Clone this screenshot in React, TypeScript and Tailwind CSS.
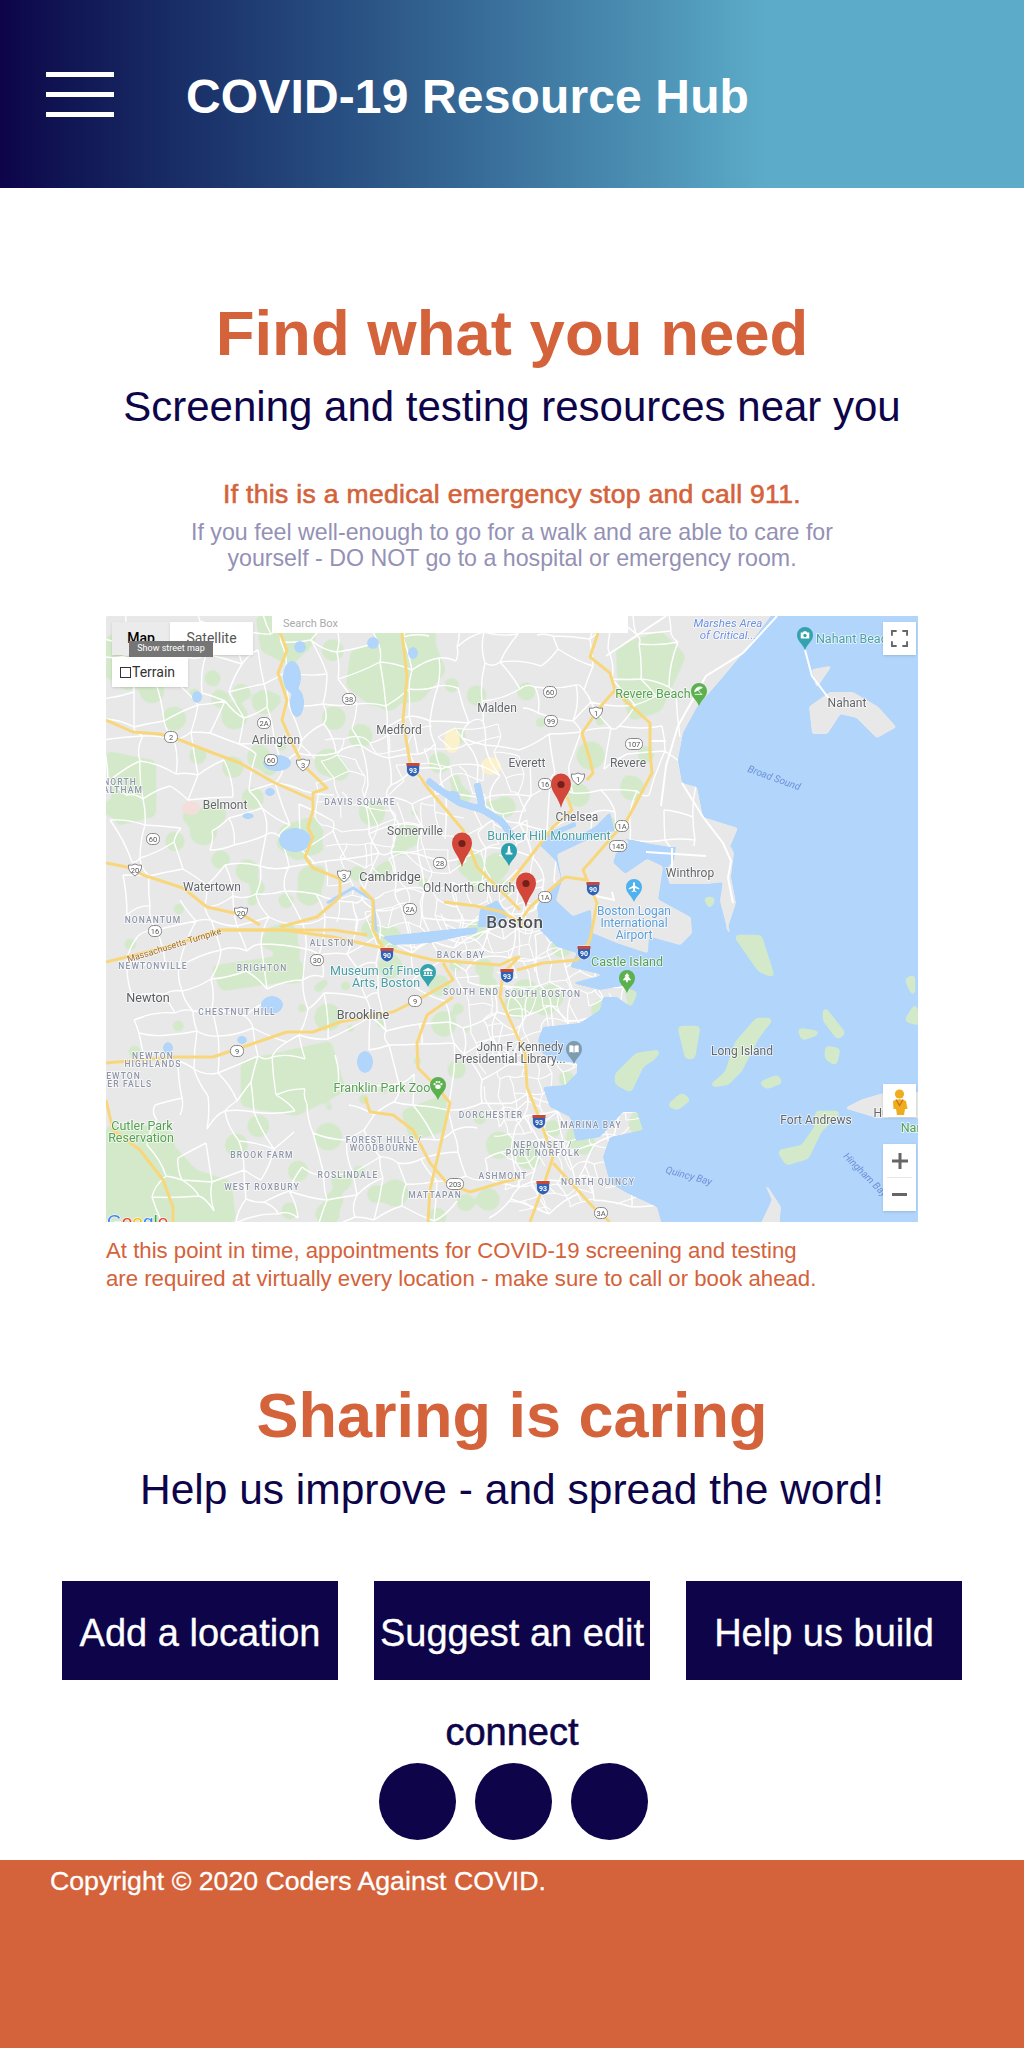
const LAND = "#e8e8e8";
const WATER = "#b1d5fb";
const GREEN = "#d3e9ca";
const ROAD = "#f8d77c";

function seeded(seed: number) {
  let s = seed;
  return () => {
    s = (s * 16807) % 2147483647;
    return s / 2147483647;
  };
}

// seeded street mesh so the map looks the same every run
function streetMesh(x0: number, y0: number, x1: number, y1: number, step: number, seed: number, drop: number) {
  const rnd = seeded(seed);
  const pts: [number, number][][] = [];
  for (let r = 0; y0 + r * step <= y1; r++) {
    const row: [number, number][] = [];
    for (let c = 0; x0 + c * step <= x1; c++) {
      row.push([x0 + c * step + (rnd() - 0.5) * step * 0.8 + r * 3, y0 + r * step + (rnd() - 0.5) * step * 0.8 - c * 2]);
    }
    pts.push(row);
  }
  let d = "";
  pts.forEach((row, r) =>
    row.forEach((p, c) => {
      const right = row[c + 1];
      const down = pts[r + 1]?.[c];
      if (right && rnd() > drop) {
        const mx = (p[0] + right[0]) / 2;
        const my = (p[1] + right[1]) / 2 + (rnd() - 0.5) * step * 0.4;
        d += `M${p[0].toFixed(0)},${p[1].toFixed(0)}Q${mx.toFixed(0)},${my.toFixed(0)} ${right[0].toFixed(0)},${right[1].toFixed(0)}`;
      }
      if (down && rnd() > drop) {
        const mx = (p[0] + down[0]) / 2 + (rnd() - 0.5) * step * 0.4;
        const my = (p[1] + down[1]) / 2;
        d += `M${p[0].toFixed(0)},${p[1].toFixed(0)}Q${mx.toFixed(0)},${my.toFixed(0)} ${down[0].toFixed(0)},${down[1].toFixed(0)}`;
      }
    }),
  );
  return d;
}

const STREETS = streetMesh(-10, -5, 560, 620, 27, 4711, 0.24);
const INNER = streetMesh(200, 130, 420, 340, 17, 2207, 0.38);
const DOWNTOWN = streetMesh(340, 300, 500, 600, 13, 991, 0.35);

const rndBlob = seeded(1234);
const SMALL_PARKS: [number, number, number][] = Array.from({ length: 150 }, () => [
  rndBlob() * 540,
  rndBlob() * 606,
  4 + rndBlob() * 10,
]);

const WATER_MAIN =
  "M680,-20 L830,-20 L830,626 L561,626 L551,591 L521,577 L504,567 L497,541 L504,521 L537,514 L531,496 L517,496 L494,521 L470,525 L464,501 L444,491 L437,471 L459,469 L471,457 L471,447 L447,444 L436,437 L432,424 L437,411 L474,407 L494,394 L497,381 L511,381 L522,389 L527,377 L521,369 L494,374 L466,367 L497,359 L464,351 L471,337 L451,331 L434,314 L431,290 L440,277 L455,262 L450,245 L440,235 L432,228 L445,222 L470,222 L490,210 L504,196 L510,222 L527,224 L545,228 L564,231 L624,231 L632,212 L597,201 L591,171 L576,167 L572,144 L577,117 L591,91 L617,61 L637,37 Z";

const GREY_LAND = [
  "571,231 624,231 627,237 624,261 629,287 621,311 623,316 615,285 618,265 601,267 564,267 561,254 569,244",
  "452,239 477,227 507,216 522,226 509,237 506,247 519,259 541,244 556,251 551,284 584,302 585,317 574,328 542,319 541,336 511,326 487,316 486,292 467,299 451,284 457,264",
  "704,91 724,77 747,77 771,91 789,111 771,121 751,101 734,97 721,117 707,117",
  "707,54 724,51 711,70",
  "741,492 757,484 781,477 830,477 830,501 771,501",
  "661,571 674,591 671,626 647,626 667,584",
];

const GREEN_ISLANDS = [
  "607,469 621,457 631,427 651,404 664,404 651,421 634,454 621,467",
  "574,412 592,412 587,441 581,441",
  "511,459 531,439 552,436 547,442 536,449 524,474 511,467",
  "564,489 576,479 582,484 571,492",
  "631,321 654,321 666,359 654,354",
  "694,414 711,417 697,422",
  "719,394 737,417 732,421 719,404",
  "721,432 732,434 729,447 721,442",
  "656,467 671,461 674,466 661,471",
  "674,536 697,531 711,511 711,497 732,497 714,514 701,541 681,547",
  "801,364 807,361 807,377",
  "801,404 809,391 812,407",
  "521,375 529,377 524,389",
  "600,283 607,283 604,290",
];

// parks and woods, drawn under the streets
const PARKS = [
  "0,20 35,15 60,35 50,65 20,75 0,60",
  "150,0 205,0 210,25 185,50 155,35",
  "245,35 320,5 340,55 315,85 265,90 240,70",
  "510,30 555,15 580,40 555,95 525,105 512,70",
  "0,135 50,145 50,200 10,210",
  "175,210 210,200 218,235 190,245 170,230",
  "105,350 175,340 185,365 115,375",
  "135,445 225,425 240,475 190,500 135,490",
  "0,510 50,510 100,565 110,606 0,606",
  "60,545 125,565 130,606 70,606",
  "295,495 340,478 340,515 305,525",
];

const YELLOW = [
  "M0,104 27,116 54,118 74,124 107,137 134,147 167,166 207,184",
  "M174,0 174,17 181,34 172,57 181,84 176,104 186,127 197,149 221,172 207,177 207,194 202,212 207,221 199,241 207,252 237,264",
  "M296,0 296,17 301,61 297,104 304,147 321,171 357,214 371,251 414,294",
  "M414,340 397,357 394,381 404,404 419,437 421,471 434,504 447,541 437,571 424,606",
  "M447,547 487,591 504,606",
  "M0,346 61,331 114,314 177,314 227,321 277,332 327,344 394,349 411,341",
  "M111,314 161,314 227,314 261,319",
  "M0,247 21,251 37,259 77,272 101,291 137,299 154,309",
  "M234,261 234,281 211,301 174,311",
  "M254,271 267,284 267,314 277,332",
  "M0,447 67,441 107,441 137,431 181,416 207,416 234,406 287,396 317,381 347,364 337,347",
  "M347,381 321,399 311,427 312,452 331,471 344,487 334,531 324,574 322,606",
  "M259,481 264,496 287,499 307,514 324,547 341,567 364,576 394,567 414,562",
  "M0,484 7,514 34,534 57,564 67,591 67,606",
  "M492,17 484,41 504,57 509,74 494,91 476,117 484,144 487,157 481,164",
  "M461,181 466,194 447,211 424,241 404,267",
  "M511,77 544,107 544,137 546,157 521,204 477,254 481,264 459,261 424,291 417,301",
  "M481,264 491,287 484,324 471,344 437,347 411,354",
  "M338,286 370,290 396,296 420,310",
];

const WHITE_ROADS = [
  "M671,0 637,37 600,60 572,110 560,150 555,190",
  "M576,167 597,201 617,227 625,245 622,262 627,287",
  "M540,236 600,240",
  "M566,232 566,262",
  "M699,34 706,60 724,84",
  "M545,125 560,125",
  "M500,40 560,0",
  "M490,280 508,284 506,276",
];

const LAKES: [number, number, number, number][] = [
  [186, 61, 9, 16], [191, 87, 7, 14], [194, 31, 6, 6], [171, 147, 14, 8], [189, 224, 16, 12], [164, 176, 5, 4],
  [259, 446, 8, 11], [166, 389, 11, 9], [136, 424, 5, 4], [91, 81, 5, 6], [267, 27, 6, 6], [307, 37, 5, 6],
  [62, 432, 5, 6], [142, 200, 6, 3], [347, 180, 7, 5],
];

type Kind = "place" | "big" | "boston" | "caps" | "teal" | "green" | "blue" | "logan";

const LABELS: [number, number, string, Kind][] = [
  [391, 96, "Malden", "place"], [293, 118, "Medford", "place"], [170, 128, "Arlington", "place"],
  [119, 193, "Belmont", "place"], [309, 219, "Somerville", "place"], [106, 275, "Watertown", "place"],
  [284, 265, "Cambridge", "big"], [363, 276, "Old North Church", "place"], [409, 312, "Boston", "boston"],
  [421, 151, "Everett", "place"], [522, 151, "Revere", "place"], [471, 205, "Chelsea", "place"],
  [741, 91, "Nahant", "place"], [584, 261, "Winthrop", "place"], [42, 386, "Newton", "big"],
  [257, 403, "Brookline", "big"], [636, 439, "Long Island", "place"], [710, 508, "Fort Andrews", "place"],
  [775, 501, "Hu", "place"], [414, 435, "John F. Kennedy", "place"], [404, 447, "Presidential Library...", "place"],
  [14, 169, "NORTH", "caps"], [17, 177, "ALTHAM", "caps"], [254, 189, "DAVIS SQUARE", "caps"], [47, 307, "NONANTUM", "caps"],
  [226, 330, "ALLSTON", "caps"], [355, 342, "BACK BAY", "caps"], [47, 353, "NEWTONVILLE", "caps"], [156, 355, "BRIGHTON", "caps"],
  [365, 379, "SOUTH END", "caps"], [437, 381, "SOUTH BOSTON", "caps"], [131, 399, "CHESTNUT HILL", "caps"],
  [47, 443, "NEWTON", "caps"], [47, 451, "HIGHLANDS", "caps"], [14, 463, "NEWTON", "caps"], [14, 471, "UPPER FALLS", "caps"],
  [385, 502, "DORCHESTER", "caps"], [278, 527, "FOREST HILLS /", "caps"], [278, 535, "WOODBOURNE", "caps"],
  [156, 542, "BROOK FARM", "caps"], [242, 562, "ROSLINDALE", "caps"], [397, 563, "ASHMONT", "caps"],
  [156, 574, "WEST ROXBURY", "caps"], [329, 582, "MATTAPAN", "caps"], [485, 512, "MARINA BAY", "caps"],
  [437, 532, "NEPONSET /", "caps"], [437, 540, "PORT NORFOLK", "caps"], [492, 569, "NORTH QUINCY", "caps"],
  [443, 224, "Bunker Hill Monument", "teal"], [749, 27, "Nahant Beach", "teal"], [269, 359, "Museum of Fine", "teal"],
  [280, 371, "Arts, Boston", "teal"], [547, 82, "Revere Beach", "green"], [276, 476, "Franklin Park Zoo", "green"],
  [36, 514, "Cutler Park", "green"], [35, 526, "Reservation", "green"], [521, 350, "Castle Island", "green"],
  [806, 516, "Nan", "green"], [622, 11, "Marshes Area", "blue"], [622, 23, "of Critical...", "blue"],
  [528, 299, "Boston Logan", "logan"], [528, 311, "International", "logan"], [528, 323, "Airport", "logan"],
];

const SEA_LABELS: [number, number, number, string][] = [
  [667, 165, 20, "Broad Sound"],
  [582, 563, 15, "Quincy Bay"],
  [757, 561, 45, "Hingham Bay"],
];

const SHIELDS: [number, number, string][] = [
  [243, 83, "38"], [158, 107, "2A"], [65, 121, "2"], [165, 144, "60"], [197, 149, "3"], [47, 223, "60"], [29, 254, "20"],
  [334, 247, "28"], [238, 260, "3"], [304, 293, "2A"], [135, 297, "20"], [49, 315, "16"], [444, 76, "60"], [490, 97, "1"],
  [445, 105, "99"], [528, 128, "107"], [472, 163, "1"], [439, 168, "16"], [516, 210, "1A"], [512, 230, "145"], [439, 281, "1A"],
  [211, 344, "30"], [309, 385, "9"], [131, 435, "9"], [349, 568, "203"], [495, 597, "3A"],
];

const US_ROUTES = ["1", "3", "20"];

const INTERSTATES: [number, number, string][] = [
  [307, 153, "93"], [487, 272, "90"], [281, 338, "90"], [401, 359, "93"], [478, 336, "90"], [433, 505, "93"], [437, 571, "93"],
];

// little white glyphs, drawn around the head of the marker
const POI_GLYPHS: Record<string, React.ReactNode> = {
  monument: <path d="M-1,-6 h2 l1,8 h2 v2 h-8 v-2 h2 z" fill="#fff" />,
  camera: (
    <>
      <path d="M-5,-3 h2.5 l1,-1.5 h3 l1,1.5 h2.5 v7 h-10 z" fill="#fff" />
      <circle r="2" cy="0.5" fill="#35a3ad" />
    </>
  ),
  umbrella: <path d="M-5,1 a6,6 0 0 1 9,-5 z M-1,-1 l4,5 M-5,4 h9" fill="#fff" stroke="#fff" strokeWidth="1" />,
  plane: <path d="M0,-6 q1.2,0 1.2,2 v2.4 l5,3 v1.4 l-5,-1.6 v2.8 l1.6,1.2 v1 l-2.8,-.8 -2.8,.8 v-1 l1.6,-1.2 v-2.8 l-5,1.6 v-1.4 l5,-3 v-2.4 q0,-2 1.2,-2 z" fill="#fff" />,
  museum: <path d="M0,-5 l5.5,3 v1 h-11 v-1 z M-4.5,0 h2 v3 h-2 z M-1,0 h2 v3 h-2 z M2.5,0 h2 v3 h-2 z M-5.5,3.5 h11 v1.2 h-11 z" fill="#fff" />,
  paw: (
    <g fill="#fff">
      <ellipse cy="2" rx="3.2" ry="2.6" />
      <circle cx="-4" cy="-1" r="1.3" />
      <circle cx="-1.5" cy="-3.4" r="1.3" />
      <circle cx="1.5" cy="-3.4" r="1.3" />
      <circle cx="4" cy="-1" r="1.3" />
    </g>
  ),
  tree: <path d="M0,-6 l3,4 h-1.5 l3.5,4.5 h-4 v2.5 h-2 v-2.5 h-4 l3.5,-4.5 h-1.5 z" fill="#fff" />,
  book: <path d="M-5.5,-4 q3,-1 5,.5 v8 q-2,-1.5 -5,-.5 z M5.5,-4 q-3,-1 -5,.5 v8 q2,-1.5 5,-.5 z" fill="#fff" />,
};

const POIS: [number, number, string, string][] = [
  [403, 250, "#2a9fb0", "monument"], [699, 34, "#35a3ad", "camera"], [593, 90, "#5cb14f", "umbrella"], [528, 286, "#4db2ee", "plane"],
  [322, 371, "#35a3ad", "museum"], [332, 484, "#5cb14f", "paw"], [521, 377, "#5cb14f", "tree"], [468, 448, "#7f9cae", "book"],
];

const PINS: [number, number][] = [
  [356, 251],
  [455, 192],
  [420, 291],
];

const LABEL_STYLE: Record<Kind, { fill: string; size: number; spacing?: number; weight?: number; italic?: boolean }> = {
  place: { fill: "#63666a", size: 12 },
  big: { fill: "#5a5d61", size: 12.6 },
  boston: { fill: "#4e5155", size: 17, spacing: 0.6, weight: 500 },
  caps: { fill: "#8d95a8", size: 8.5, spacing: 1.1, weight: 500 },
  teal: { fill: "#4a9fa6", size: 12.5 },
  green: { fill: "#55a052", size: 12.5 },
  blue: { fill: "#6d92e2", size: 11.5, italic: true },
  logan: { fill: "#5a9edc", size: 12 },
};

function MapDrawing() {
  return (
    <svg viewBox="0 0 812 606" className="block h-full w-full blur-[0.35px]" fontFamily="Roboto, sans-serif">
      <defs>
        <filter id="goo" filterUnits="userSpaceOnUse" x="-30" y="-30" width="880" height="670">
          <feGaussianBlur stdDeviation="3" />
          <feComponentTransfer>
            <feFuncA type="linear" slope="5" intercept="-1.8" />
          </feComponentTransfer>
        </filter>
        <filter id="soft" filterUnits="userSpaceOnUse" x="-30" y="-30" width="880" height="670">
          <feGaussianBlur stdDeviation="1" />
          <feComponentTransfer>
            <feFuncA type="linear" slope="4" intercept="-1.5" />
          </feComponentTransfer>
        </filter>
        <filter id="islands" filterUnits="userSpaceOnUse" x="-30" y="-30" width="880" height="670">
          <feGaussianBlur stdDeviation="2.2" />
          <feComponentTransfer>
            <feFuncA type="linear" slope="6" intercept="-2.2" />
          </feComponentTransfer>
        </filter>
      </defs>
      <rect width="812" height="606" fill={LAND} />
      <g filter="url(#goo)" fill={GREEN}>
        {PARKS.map((p) => (
          <polygon key={p} points={p} />
        ))}
        {SMALL_PARKS.map(([cx, cy, r]) => (
          <circle key={`${cx}-${cy}`} cx={cx} cy={cy} r={r} />
        ))}
      </g>
      <ellipse cx="85" cy="192" rx="9" ry="7" fill="#f4dedb" />
      <ellipse cx="346" cy="125" rx="8" ry="12" fill="#fbf1cb" />
      <ellipse cx="385" cy="150" rx="10" ry="9" fill="#fbf1cb" />
      <path d={STREETS} fill="none" stroke="#fff" strokeWidth="1.4" />
      <path d={INNER} fill="none" stroke="#fff" strokeWidth="1.1" />
      <path d={DOWNTOWN} fill="none" stroke="#fff" strokeWidth="1.1" />
      <g filter="url(#soft)" fill={WATER}>
        <path d={WATER_MAIN} />
        <polygon points="266,314 287,329 324,327 371,317 374,293 391,284 402,300 392,310 347,313 271,321" />
        {LAKES.map(([cx, cy, rx, ry]) => (
          <ellipse key={`${cx}-${cy}`} cx={cx} cy={cy} rx={rx} ry={ry} />
        ))}
        <path d="M321,164 334,174 354,187 377,194 395,205 408,222" fill="none" stroke={WATER} strokeWidth="7" />
        <path d="M371,167 376,190" fill="none" stroke={WATER} strokeWidth="7" />
        <path d="M440,220 470,208" fill="none" stroke={WATER} strokeWidth="5" />
      </g>
      <path d="M221,287 247,272 267,284 270,316" fill="none" stroke={WATER} strokeWidth="3" />
      <g filter="url(#soft)">
        {GREY_LAND.map((p) => (
          <polygon key={p} points={p} fill={LAND} stroke={LAND} strokeWidth="2" strokeLinejoin="round" />
        ))}
      </g>
      <g filter="url(#islands)">
        {GREEN_ISLANDS.map((p) => (
          <polygon key={p} points={p} fill={GREEN} stroke={GREEN} strokeWidth="4" strokeLinejoin="round" />
        ))}
      </g>
      {WHITE_ROADS.map((d) => (
        <path key={d} d={d} fill="none" stroke="#fff" strokeWidth="2" />
      ))}
      {YELLOW.map((d) => (
        <path key={d} d={d} fill="none" stroke={ROAD} strokeWidth="3" strokeLinejoin="round" />
      ))}
      {LABELS.map(([x, y, text, kind]) => {
        const st = LABEL_STYLE[kind];
        return (
          <text
            key={`${text}-${x}`}
            x={x}
            y={y}
            textAnchor="middle"
            fill={st.fill}
            fontSize={st.size}
            letterSpacing={st.spacing}
            fontWeight={st.weight}
            fontStyle={st.italic ? "italic" : undefined}
            stroke="#fff"
            strokeOpacity="0.75"
            strokeWidth="1.6"
            paintOrder="stroke"
          >
            {text}
          </text>
        );
      })}
      {SEA_LABELS.map(([x, y, rot, text]) => (
        <text key={text} x={x} y={y} transform={`rotate(${rot} ${x} ${y})`} textAnchor="middle" fill="#6d92d8" fontSize="10" fontStyle="italic">
          {text}
        </text>
      ))}
      <text x="69" y="332" transform="rotate(-17 69 332)" textAnchor="middle" fill="#9a6a30" fontSize="9" stroke="#fff" strokeOpacity="0.6" strokeWidth="1.2" paintOrder="stroke">
        Massachusetts Turnpike
      </text>
      {SHIELDS.map(([x, y, n]) => (
        <g key={`${x}-${y}`}>
          {US_ROUTES.includes(n) ? (
            <path d={`M${x - 6.5},${y - 5} q3,1 6.5,-1 q3.5,2 6.5,1 q1,6 -6.5,11 q-7.5,-5 -6.5,-11 z`} fill="#fff" stroke="#7a7a7a" strokeWidth="0.9" />
          ) : (
            <rect x={x - (n.length > 2 ? 8.5 : 6.5)} y={y - 5.5} width={n.length > 2 ? 17 : 13} height="11" rx="5" fill="#fff" stroke="#7a7a7a" strokeWidth="0.9" />
          )}
          <text x={x} y={y + 2.7} textAnchor="middle" fontSize="7.5" fill="#555">
            {n}
          </text>
        </g>
      ))}
      {INTERSTATES.map(([x, y, n]) => (
        <g key={`${x}-${y}`}>
          <path d={`M${x - 6.5},${y - 6} h13 v7 q0,5 -6.5,7 q-6.5,-2 -6.5,-7 z`} fill="#2f62b5" stroke="#fff" strokeWidth="0.6" />
          <rect x={x - 6.5} y={y - 6} width="13" height="3" fill="#c8473c" />
          <text x={x} y={y + 4} textAnchor="middle" fontSize="7" fontWeight="700" fill="#fff">
            {n}
          </text>
        </g>
      ))}
      {POIS.map(([x, y, c, glyph]) => (
        <g key={`${x}-${y}`}>
          <path d={`M${x},${y} C${x - 3},${y - 7} ${x - 8},${y - 9} ${x - 8},${y - 15} a8,8 0 1 1 16,0 C${x + 8},${y - 9} ${x + 3},${y - 7} ${x},${y} z`} fill={c} />
          <g transform={`translate(${x} ${y - 15}) scale(0.85)`}>{POI_GLYPHS[glyph]}</g>
        </g>
      ))}
      {PINS.map(([x, y]) => (
        <g key={`${x}-${y}`}>
          <path d={`M${x},${y} C${x - 2},${y - 10} ${x - 10},${y - 16} ${x - 10},${y - 24} a10,10.5 0 1 1 20,0 C${x + 10},${y - 16} ${x + 2},${y - 10} ${x},${y} z`} fill="#d2473a" />
          <circle cx={x} cy={y - 23.5} r="3.6" fill="#74201a" />
        </g>
      ))}
      <text x="1" y="612" fontSize="19" fontFamily="'Liberation Sans', sans-serif" stroke="#fff" strokeWidth="1" paintOrder="stroke">
        <tspan fill="#4285f4">G</tspan>
        <tspan fill="#ea4335">o</tspan>
        <tspan fill="#fbbc05">o</tspan>
        <tspan fill="#4285f4">g</tspan>
        <tspan fill="#34a853">l</tspan>
        <tspan fill="#ea4335">e</tspan>
      </text>
    </svg>
  );
}

function Pegman() {
  return (
    <svg viewBox="0 0 33 33" className="h-full w-full">
      <circle cx="16.5" cy="10" r="4.6" fill="#f0ac1f" />
      <path d="M10,17 q6.5,-3.5 13,0 l1.5,8 h-2.5 l-1,6 h-7 l-1,-6 h-2.5 z" fill="#f0ac1f" />
      <path d="M13,15.5 l3.5,6 3.5,-6" fill="none" stroke="#c9701a" strokeWidth="1.2" />
    </svg>
  );
}

function MapControls() {
  return (
    <>
      <div className="absolute left-[166px] top-0 flex h-[17px] w-[356px] items-center bg-white pl-[11px] font-['Roboto',sans-serif] text-[11px] text-[#aaaaaa]">
        Search Box
      </div>
      <div className="absolute left-[6px] top-[6px] flex font-['Roboto',sans-serif] text-[14px]">
        <div className="flex h-[33px] w-[58px] items-center justify-center bg-[#ebebeb] font-medium text-black shadow-sm">Map</div>
        <div className="flex h-[33px] w-[83px] items-center justify-center bg-white text-[#565656] shadow-sm">Satellite</div>
      </div>
      <div className="absolute left-[6px] top-[41px] flex h-[30px] w-[76px] items-center gap-[1px] bg-white pl-[8px] font-['Roboto',sans-serif] text-[14px] text-[#333] shadow-sm">
        <span className="h-[11px] w-[11px] border border-[#333]" />
        Terrain
      </div>
      <div className="absolute left-[23px] top-[25px] flex h-[16px] w-[84px] items-center justify-center bg-[#757575] font-['Roboto',sans-serif] text-[9px] text-white">
        Show street map
      </div>
      <div className="absolute right-[2px] top-[6px] flex h-[33px] w-[33px] items-center justify-center bg-white shadow-sm">
        <svg viewBox="0 0 18 18" className="h-[17px] w-[17px]" fill="none" stroke="#666" strokeWidth="2">
          <path d="M1,6 V1 H6 M12,1 H17 V6 M17,12 V17 H12 M6,17 H1 V12" />
        </svg>
      </div>
      <div className="absolute right-[2px] top-[468px] h-[33px] w-[33px] bg-white shadow-sm">
        <Pegman />
      </div>
      <div className="absolute right-[2px] top-[528px] flex h-[67px] w-[33px] flex-col bg-white shadow-sm">
        <div className="flex flex-1 items-center justify-center">
          <svg viewBox="0 0 16 16" className="h-[16px] w-[16px]" fill="#666">
            <path d="M6.5,0 h3 v6.5 h6.5 v3 h-6.5 v6.5 h-3 v-6.5 h-6.5 v-3 h6.5 z" />
          </svg>
        </div>
        <div className="mx-[4px] h-px bg-[#e6e6e6]" />
        <div className="flex flex-1 items-center justify-center">
          <div className="h-[3px] w-[15px] bg-[#666]" />
        </div>
      </div>
    </>
  );
}

export default function App() {
  return (
    <div className="flex min-h-[2048px] w-full flex-col bg-white font-['Liberation_Sans',Arial,sans-serif]">
      <header className="flex h-[188px] items-center bg-gradient-to-r from-[#0d0449] to-[#5cacc9] to-75% pl-[46px]">
        <div className="flex w-[68px] flex-col gap-[15px]">
          <div className="h-[5px] bg-white" />
          <div className="h-[5px] bg-white" />
          <div className="h-[5px] bg-white" />
        </div>
        <h1 className="ml-[72px] pt-[5px] text-[48px] font-bold leading-none tracking-[0.14px] text-white">COVID-19 Resource Hub</h1>
      </header>

      <section className="flex flex-col items-center text-center">
        <h2 className="mt-[114px] text-[63.5px] font-bold leading-none text-[#d4623a]">Find what you need</h2>
        <p className="mt-[20px] text-[42px] leading-none text-[#0d0449]">Screening and testing resources near you</p>
        <p className="mt-[53px] text-[26.5px] leading-none tracking-[0.32px] text-[#d4623a] [-webkit-text-stroke:0.6px_#d4623a]">
          If this is a medical emergency stop and call 911.
        </p>
        <p className="mt-[12px] text-[23.2px] leading-[26px] text-[#9491b5]">
          If you feel well-enough to go for a walk and are able to care for
          <br />
          yourself - DO NOT go to a hospital or emergency room.
        </p>
      </section>

      <div className="relative ml-[106px] mt-[45px] h-[606px] w-[812px] overflow-hidden">
        <MapDrawing />
        <MapControls />
      </div>

      <p className="ml-[106px] mt-[15px] text-[22.2px] leading-[28px] text-[#d4623a]">
        At this point in time, appointments for COVID-19 screening and testing
        <br />
        are required at virtually every location - make sure to call or book ahead.
      </p>

      <section className="flex flex-col items-center text-center">
        <h2 className="mt-[91px] text-[63px] font-bold leading-none text-[#d4623a]">Sharing is caring</h2>
        <p className="mt-[22px] text-[42.5px] leading-none text-[#0d0449]">Help us improve - and spread the word!</p>
      </section>

      <div className="mt-[69px] grid grid-cols-3 gap-[36px] px-[62px]">
        {["Add a location", "Suggest an edit", "Help us build"].map((label) => (
          <a key={label} className="flex h-[99px] items-center justify-center bg-[#0d0449] pt-[6px] text-[38px] text-white [-webkit-text-stroke:0.3px_#fff]">
            {label}
          </a>
        ))}
      </div>

      <div className="flex flex-col items-center">
        <p className="mt-[33px] text-[38px] leading-none text-[#0d0449] [-webkit-text-stroke:0.6px_#0d0449]">connect</p>
        <div className="ml-[3px] mt-[12px] flex gap-[19px]">
          <span className="h-[77px] w-[77px] rounded-full bg-[#0d0449]" />
          <span className="h-[77px] w-[77px] rounded-full bg-[#0d0449]" />
          <span className="h-[77px] w-[77px] rounded-full bg-[#0d0449]" />
        </div>
      </div>

      <footer className="mt-[20px] h-[188px] bg-[#d4623a] pl-[50px] pt-[8px] text-[26.7px] leading-none text-white [-webkit-text-stroke:0.3px_#fff]">
        Copyright © 2020 Coders Against COVID.
      </footer>
    </div>
  );
}
